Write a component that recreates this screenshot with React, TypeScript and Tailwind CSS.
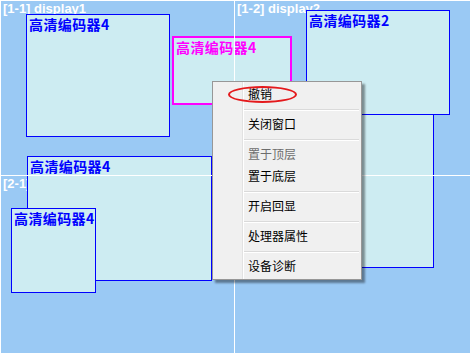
import React from "react";

type Win = {
  id: string;
  title: string;
  left: number;
  top: number;
  width: number;
  height: number;
  tone: "blue" | "pink";
};

// positions are relative to the wall's inner edge (page coords minus the 1px frame)
const windows: Win[] = [
  { id: "d", title: "", left: 239, top: 99, width: 194, height: 168, tone: "blue" },
  { id: "a", title: "高清编码器4", left: 25, top: 13, width: 144, height: 123, tone: "blue" },
  { id: "b", title: "高清编码器4", left: 171, top: 35, width: 120, height: 69, tone: "pink" },
  { id: "c", title: "高清编码器2", left: 305, top: 9, width: 144, height: 105, tone: "blue" },
  { id: "e", title: "高清编码器4", left: 26, top: 155, width: 185, height: 125, tone: "blue" },
  { id: "f", title: "高清编码器4", left: 10, top: 207, width: 85, height: 85, tone: "blue" },
];

// the [2-2] label sits under the context menu, so it is left blank
const cells = ["[1-1] display1", "[1-2] display2", "[2-1] display3", ""];

type MenuEntry = { label: string; disabled?: boolean } | "sep";

const menu: MenuEntry[] = [
  { label: "撤销" },
  "sep",
  { label: "关闭窗口" },
  "sep",
  { label: "置于顶层", disabled: true },
  { label: "置于底层" },
  "sep",
  { label: "开启回显" },
  "sep",
  { label: "处理器属性" },
  "sep",
  { label: "设备诊断" },
];

function WallWindow({ w }: { w: Win }) {
  return (
    <div
      className={
        w.tone === "pink"
          ? "absolute overflow-hidden border-2 border-[#ff00ff] bg-[#cdecf2] pl-[2px] pt-[1px] text-[#ff00ff]"
          : "absolute overflow-hidden border border-[#0000ff] bg-[#cdecf2] pl-[2px] pt-[1px] text-[#0000ff]"
      }
      style={{ left: w.left, top: w.top, width: w.width, height: w.height }}
    >
      {w.title && (
        <div className="whitespace-nowrap text-[14px] font-bold leading-[17px] tracking-[0.4px]">
          {w.title}
        </div>
      )}
    </div>
  );
}

function ContextMenu() {
  return (
    <div className="absolute left-[211px] top-[80px] w-[150px] border border-[#979797] bg-[#f0f0f0] pb-[1px] pt-[2px] shadow-[3px_3px_2px_rgba(0,0,0,0.4)]">
      <div className="absolute bottom-0 left-[29px] top-0 flex">
        <div className="w-px bg-[#e2e2e2]" />
        <div className="w-px bg-white" />
      </div>
      {menu.map((m, i) =>
        m === "sep" ? (
          <div key={i} className="ml-[31px] mr-[2px] flex h-[8px] flex-col pt-[3px]">
            <div className="h-px bg-[#dadada]" />
            <div className="h-px bg-white" />
          </div>
        ) : (
          <div
            key={i}
            className={
              m.disabled
                ? "flex h-[22px] items-center pb-[3px] pl-[35px] text-[12px] text-[#6d6d6d]"
                : "flex h-[22px] items-center pb-[3px] pl-[35px] text-[12px] text-black"
            }
          >
            {m.label}
          </div>
        )
      )}
      <div className="absolute left-[15px] top-[4px] h-[17px] w-[69px] rounded-[50%] border-2 border-[#e4191c]" />
    </div>
  );
}

export default function App() {
  return (
    <div
      className="relative h-[354px] w-[472px] overflow-hidden border border-r-2 border-white bg-[#9ac9f4]"
      style={{ fontFamily: '"Noto Sans CJK SC", "Liberation Sans", sans-serif' }}
    >
      <div className="grid h-full w-full grid-cols-[234px_1fr] grid-rows-[175px_1fr]">
        {cells.map((c, i) => (
          <div
            key={i}
            className="whitespace-nowrap pl-[2px] text-[13px] font-bold leading-[16px] text-white"
            style={{ fontFamily: '"Liberation Sans", sans-serif' }}
          >
            {c}
          </div>
        ))}
      </div>

      {windows.map((w) => (
        <WallWindow key={w.id} w={w} />
      ))}

      <div className="pointer-events-none absolute inset-0 grid grid-cols-[234px_1fr] grid-rows-[175px_1fr]">
        <div className="border-b border-r border-white" />
        <div className="border-b border-white" />
        <div className="border-r border-white" />
        <div />
      </div>

      <ContextMenu />
    </div>
  );
}
